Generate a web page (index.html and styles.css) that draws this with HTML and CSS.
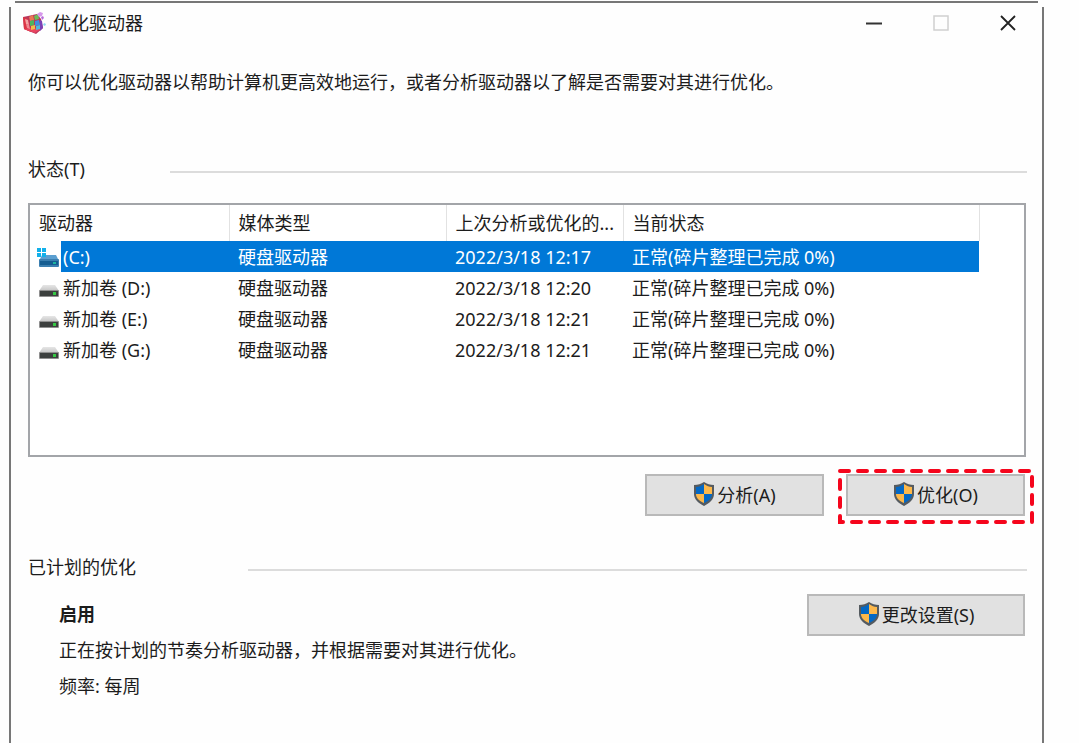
FILE: index.html
```
<!DOCTYPE html>
<html lang="zh-CN">
<head>
    <meta charset="UTF-8">
    <meta name="viewport" content="width=device-width, initial-scale=1.0">
    <title>优化驱动器</title>
    <link rel="stylesheet" href="styles.css">
</head>
<body>
    <svg class="sprites" aria-hidden="true">
        <linearGradient id="drive-top" x1="0" y1="0" x2="0" y2="1">
            <stop offset="0" stop-color="#e6e6e6"/>
            <stop offset="1" stop-color="#c4c4c4"/>
        </linearGradient>
        <symbol id="drive" viewBox="0 0 20 12">
            <path d="M4 0h12l4 6H0z" fill="url(#drive-top)"/>
            <rect y="5" width="20" height="7" rx="1" fill="#8f8f8f"/>
            <rect x="1" y="6" width="18" height="5" fill="#3c3f3e"/>
            <rect x="14" y="7" width="3" height="3" fill="#35c944"/>
        </symbol>
        <symbol id="shield" viewBox="0 0 22 24">
            <path d="M11 0C8 2 5 3 1 3v9c0 5 4 9 10 12 6-3 10-7 10-12V3c-4 0-7-1-10-3z" fill="#555b60"/>
            <path d="M11 2C8 4 6 5 3 5v7h8z" fill="#0468c4"/>
            <path d="M11 2c3 2 5 3 8 3v7h-8z" fill="#fdb84a"/>
            <path d="M3 12h8v9c-5-2-8-5-8-9z" fill="#fdb84a"/>
            <path d="M19 12h-8v9c5-2 8-5 8-9z" fill="#0468c4"/>
        </symbol>
    </svg>

    <div class="top-edge"></div>
    <main class="window">
        <header class="title-bar">
            <svg class="app-icon" viewBox="0 0 23 22" aria-hidden="true">
                <path d="M0 5l5-1 9-2 4 5 2 9-7 6-12-5z" fill="#b9385c"/>
                <path d="M0 5l5 2 3 13-7-3z" fill="#dc3444"/>
                <path d="M1 17l7-1 10 1-6 4z" fill="#e8455f"/>
                <path d="M2 7l3 1 1 5-3-1z" fill="#f3a5a5"/>
                <path d="M3 12l3 1 1 4-3-1z" fill="#ee8a94"/>
                <path d="M6 5l4-2 1 5-4 1z" fill="#ea7852"/>
                <path d="M11 4l4-2 1 5-4 1z" fill="#69bd58"/>
                <path d="M7 9l4-1v5l-4 1z" fill="#4bb65e"/>
                <path d="M12 9l4-1 1 5-5 1z" fill="#3f8ee3"/>
                <path d="M8 14l4-1v4l-4 1z" fill="#f1bd4a"/>
                <path d="M13 14l4-1v4l-4 1z" fill="#52b9d9"/>
                <path d="M17 8l2 1 1 7-3 3z" fill="#7a42b8"/>
                <path d="M14 2l3-2 3 1-1 3-3 1z" fill="#d697eb"/>
                <path d="M18 5l2-1 1 2-2 2z" fill="#b66adb"/>
                <path d="M20 12l2-1 1 2-2 1z" fill="#8bd9ee"/>
            </svg>
            <h1>优化驱动器</h1>
            <div class="window-controls">
                <button type="button" aria-label="最小化">
                    <svg viewBox="0 0 16 16"><path d="M0 8.5h16" stroke="#333" stroke-width="2"/></svg>
                </button>
                <button type="button" aria-label="最大化" disabled>
                    <svg viewBox="0 0 16 16"><rect x="1" y="1" width="14" height="14" fill="none" stroke="#d0d0d0" stroke-width="1.5"/></svg>
                </button>
                <button type="button" aria-label="关闭">
                    <svg viewBox="0 0 16 16"><path d="M1 1l14 14M15 1L1 15" stroke="#222" stroke-width="1.8"/></svg>
                </button>
            </div>
        </header>

        <p class="intro">你可以优化驱动器以帮助计算机更高效地运行，或者分析驱动器以了解是否需要对其进行优化。</p>

        <section>
            <div class="section-head status-head">
                <h2 id="status-title">状态(T)</h2>
            </div>
            <div class="drive-list">
                <table aria-labelledby="status-title">
                    <colgroup>
                        <col class="col-drive">
                        <col class="col-media">
                        <col class="col-date">
                        <col class="col-state">
                    </colgroup>
                    <thead>
                        <tr><th>驱动器</th><th>媒体类型</th><th>上次分析或优化的...</th><th>当前状态</th></tr>
                    </thead>
                    <tbody>
                        <tr class="selected">
                            <td>
                                <div class="drive">
                                    <svg class="system-icon" viewBox="0 0 22 20" aria-hidden="true">
                                        <path d="M5 8h14l3 6H2z" fill="#5b9fd0"/>
                                        <rect x="2" y="12" width="20" height="8" rx="1" fill="#3b7fb0"/>
                                        <rect x="3" y="14" width="18" height="4" fill="#155d91"/>
                                        <rect x="16" y="15" width="3" height="2" fill="#1eb5a0"/>
                                        <path d="M0 1h4v4H0zM5 1h4v4H5zM0 6h4v4H0zM5 6h4v4H5z" fill="#12b0ea"/>
                                    </svg>
                                    <span>(C:)</span>
                                </div>
                            </td>
                            <td>硬盘驱动器</td><td>2022/3/18 12:17</td><td>正常(碎片整理已完成 0%)</td>
                        </tr>
                        <tr>
                            <td><div class="drive"><svg class="drive-icon" aria-hidden="true"><use href="#drive"/></svg><span>新加卷 (D:)</span></div></td>
                            <td>硬盘驱动器</td><td>2022/3/18 12:20</td><td>正常(碎片整理已完成 0%)</td>
                        </tr>
                        <tr>
                            <td><div class="drive"><svg class="drive-icon" aria-hidden="true"><use href="#drive"/></svg><span>新加卷 (E:)</span></div></td>
                            <td>硬盘驱动器</td><td>2022/3/18 12:21</td><td>正常(碎片整理已完成 0%)</td>
                        </tr>
                        <tr>
                            <td><div class="drive"><svg class="drive-icon" aria-hidden="true"><use href="#drive"/></svg><span>新加卷 (G:)</span></div></td>
                            <td>硬盘驱动器</td><td>2022/3/18 12:21</td><td>正常(碎片整理已完成 0%)</td>
                        </tr>
                    </tbody>
                </table>
            </div>
            <div class="actions">
                <button type="button" class="btn"><svg class="shield" aria-hidden="true"><use href="#shield"/></svg>分析(A)</button>
                <div class="highlight">
                    <button type="button" class="btn"><svg class="shield" aria-hidden="true"><use href="#shield"/></svg>优化(O)</button>
                    <svg class="highlight-frame" aria-hidden="true"><rect x="2" y="2" width="192" height="51"/></svg>
                </div>
            </div>
        </section>

        <section class="schedule">
            <div class="section-head schedule-head">
                <h2>已计划的优化</h2>
            </div>
            <div class="schedule-body">
                <div class="schedule-text">
                    <p><strong>启用</strong></p>
                    <p>正在按计划的节奏分析驱动器，并根据需要对其进行优化。</p>
                    <p>频率: 每周</p>
                </div>
                <button type="button" class="btn btn-wide"><svg class="shield" aria-hidden="true"><use href="#shield"/></svg>更改设置(S)</button>
            </div>
        </section>
    </main>
</body>
</html>
```
FILE: styles.css
```
* {
    margin: 0;
    padding: 0;
    box-sizing: border-box;
}

body {
    min-height: 100vh;
    display: flex;
    flex-direction: column;
    padding: 1px 35px 0 9px;
    background: #fefefe;
    color: #1c1c1c;
    font-family: "Noto Sans", "Noto Sans CJK SC", sans-serif;
    font-size: 18px;
    line-height: 24px;
}

button {
    font: inherit;
    color: inherit;
}

.sprites {
    position: absolute;
    width: 0;
    height: 0;
}

/* window frame */
.top-edge {
    height: 2px;
    margin: 0 6px 4px;
    background: #777;
}

.window {
    flex: 1;
    padding: 0 15px 24px 17px;
    border: solid #777;
    border-width: 0 2px;
}

.title-bar {
    display: flex;
    align-items: center;
    height: 32px;
    margin-left: -5px;
}

.app-icon {
    width: 23px;
    height: 22px;
    margin-right: 7px;
}

h1,
h2 {
    font-size: 18px;
    font-weight: normal;
}

.window-controls {
    display: flex;
    margin-left: auto;
    margin-right: 11px;
    gap: 51px;
}

.window-controls button {
    width: 16px;
    height: 16px;
    border: none;
    background: none;
}

.window-controls svg {
    display: block;
    width: 16px;
    height: 16px;
}

.intro {
    margin: 31px 0 63px;
}

/* section title with a line after it */
.section-head {
    display: grid;
    align-items: center;
}

.section-head::after {
    content: "";
    height: 2px;
    margin-top: 5px;
    background: #dcdcdc;
}

.status-head {
    grid-template-columns: 142px 1fr;
}

.schedule-head {
    grid-template-columns: 220px 1fr;
}

/* drive list */
.drive-list {
    min-height: 254px;
    margin: 22px 1px 0 0;
    border: 2px solid #a3a5a9;
    background: #fff;
}

table {
    table-layout: fixed;
    width: 949px;
    border-collapse: collapse;
}

.col-drive { width: 199px; }
.col-media { width: 217px; }
.col-date { width: 177px; }
.col-state { width: 356px; }

th,
td {
    padding: 0 0 0 9px;
    text-align: left;
    font-weight: normal;
    white-space: nowrap;
}

th {
    height: 36px;
    border-right: 1px solid #e2e2e2;
}

td {
    height: 31px;
}

.selected td {
    background: #0078d7;
    color: #fff;
}

.selected td:first-child {
    background: linear-gradient(to right, #fff 31px, #0078d7 31px);
}

.drive {
    display: flex;
    align-items: center;
}

.drive-icon {
    width: 20px;
    height: 12px;
    margin: 6px 4px 0 0;
}

.system-icon {
    width: 22px;
    height: 20px;
    margin: 0 4px 0 -2px;
}

/* buttons */
.actions {
    display: flex;
    justify-content: flex-end;
    gap: 22px;
    margin: 17px 2px 0 0;
}

.btn {
    display: flex;
    align-items: center;
    justify-content: center;
    width: 179px;
    height: 42px;
    border: 2px solid #b9b9b9;
    background: #e1e1e1;
}

.btn-wide {
    width: 218px;
}

.shield {
    width: 22px;
    height: 24px;
    margin: 0 2px 2px 0;
}

.highlight {
    position: relative;
}

.highlight-frame {
    position: absolute;
    top: -5px;
    left: -8px;
    width: 196px;
    height: 55px;
    pointer-events: none;
}

.highlight-frame rect {
    fill: none;
    stroke: #f5051c;
    stroke-width: 4px;
    stroke-dasharray: 9px 9px;
    stroke-linecap: round;
}

/* schedule */
.schedule {
    margin-top: 39px;
}

.schedule-body {
    display: flex;
    justify-content: space-between;
    align-items: flex-start;
    margin: 15px 2px 0 31px;
}

.schedule-text {
    display: grid;
    gap: 12px;
    margin-top: 8px;
}
```
